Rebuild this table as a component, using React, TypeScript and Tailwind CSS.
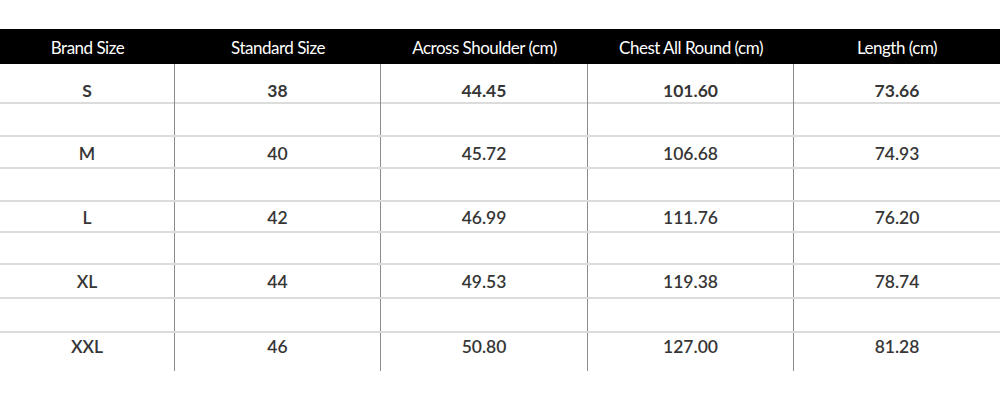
const headers = ['Brand Size', 'Standard Size', 'Across Shoulder (cm)', 'Chest All Round (cm)', 'Length (cm)'];

const rows: { cells: string[] | null; h: string; pad?: string; bold?: boolean }[] = [
  { cells: ['S', '38', '44.45', '101.60', '73.66'], h: 'h-[40px]', pad: 'pt-[14px]', bold: true },
  { cells: null, h: 'h-[33px]' },
  { cells: ['M', '40', '45.72', '106.68', '74.93'], h: 'h-[32px]', pad: 'pt-[4px]' },
  { cells: null, h: 'h-[33px]' },
  { cells: ['L', '42', '46.99', '111.76', '76.20'], h: 'h-[31px]', pad: 'pt-[3px]' },
  { cells: null, h: 'h-[32px]' },
  { cells: ['XL', '44', '49.53', '119.38', '78.74'], h: 'h-[34px]', pad: 'pt-[2px]' },
  { cells: null, h: 'h-[34px]' },
  { cells: ['XXL', '46', '50.80', '127.00', '81.28'], h: 'h-[38px]', pad: 'pb-[10px]' },
];

const cols = 'grid grid-cols-[175px_206px_207px_206px_206px]';

export default function App() {
  return (
    <div className="w-[1000px] h-[400px] bg-white pt-[29px] font-['Lato','Liberation_Sans',sans-serif]">
      {/* Header */}
      <div className={`${cols} h-[35px] bg-black text-white text-[17px] tracking-[-0.5px]`}>
        {headers.map((h) => (
          <div key={h} className="flex items-center justify-center pt-[2px]">
            {h}
          </div>
        ))}
      </div>

      {/* Body */}
      <div>
        {rows.map((row, i) => (
          <div
            key={i}
            className={`${cols} ${row.h} ${i < rows.length - 1 ? 'border-b-2 border-[#dcdcdc]' : ''}`}
          >
            {[0, 1, 2, 3, 4].map((c) => (
              <div
                key={c}
                className={`flex items-center justify-center text-[17.5px] text-[#363636] ${row.pad ?? ''} ${
                  row.bold ? 'font-bold' : 'font-semibold'
                } ${c < 4 ? 'border-r border-[#8c8c8c]' : ''}`}
              >
                {row.cells ? row.cells[c] : ''}
              </div>
            ))}
          </div>
        ))}
      </div>
    </div>
  );
}
